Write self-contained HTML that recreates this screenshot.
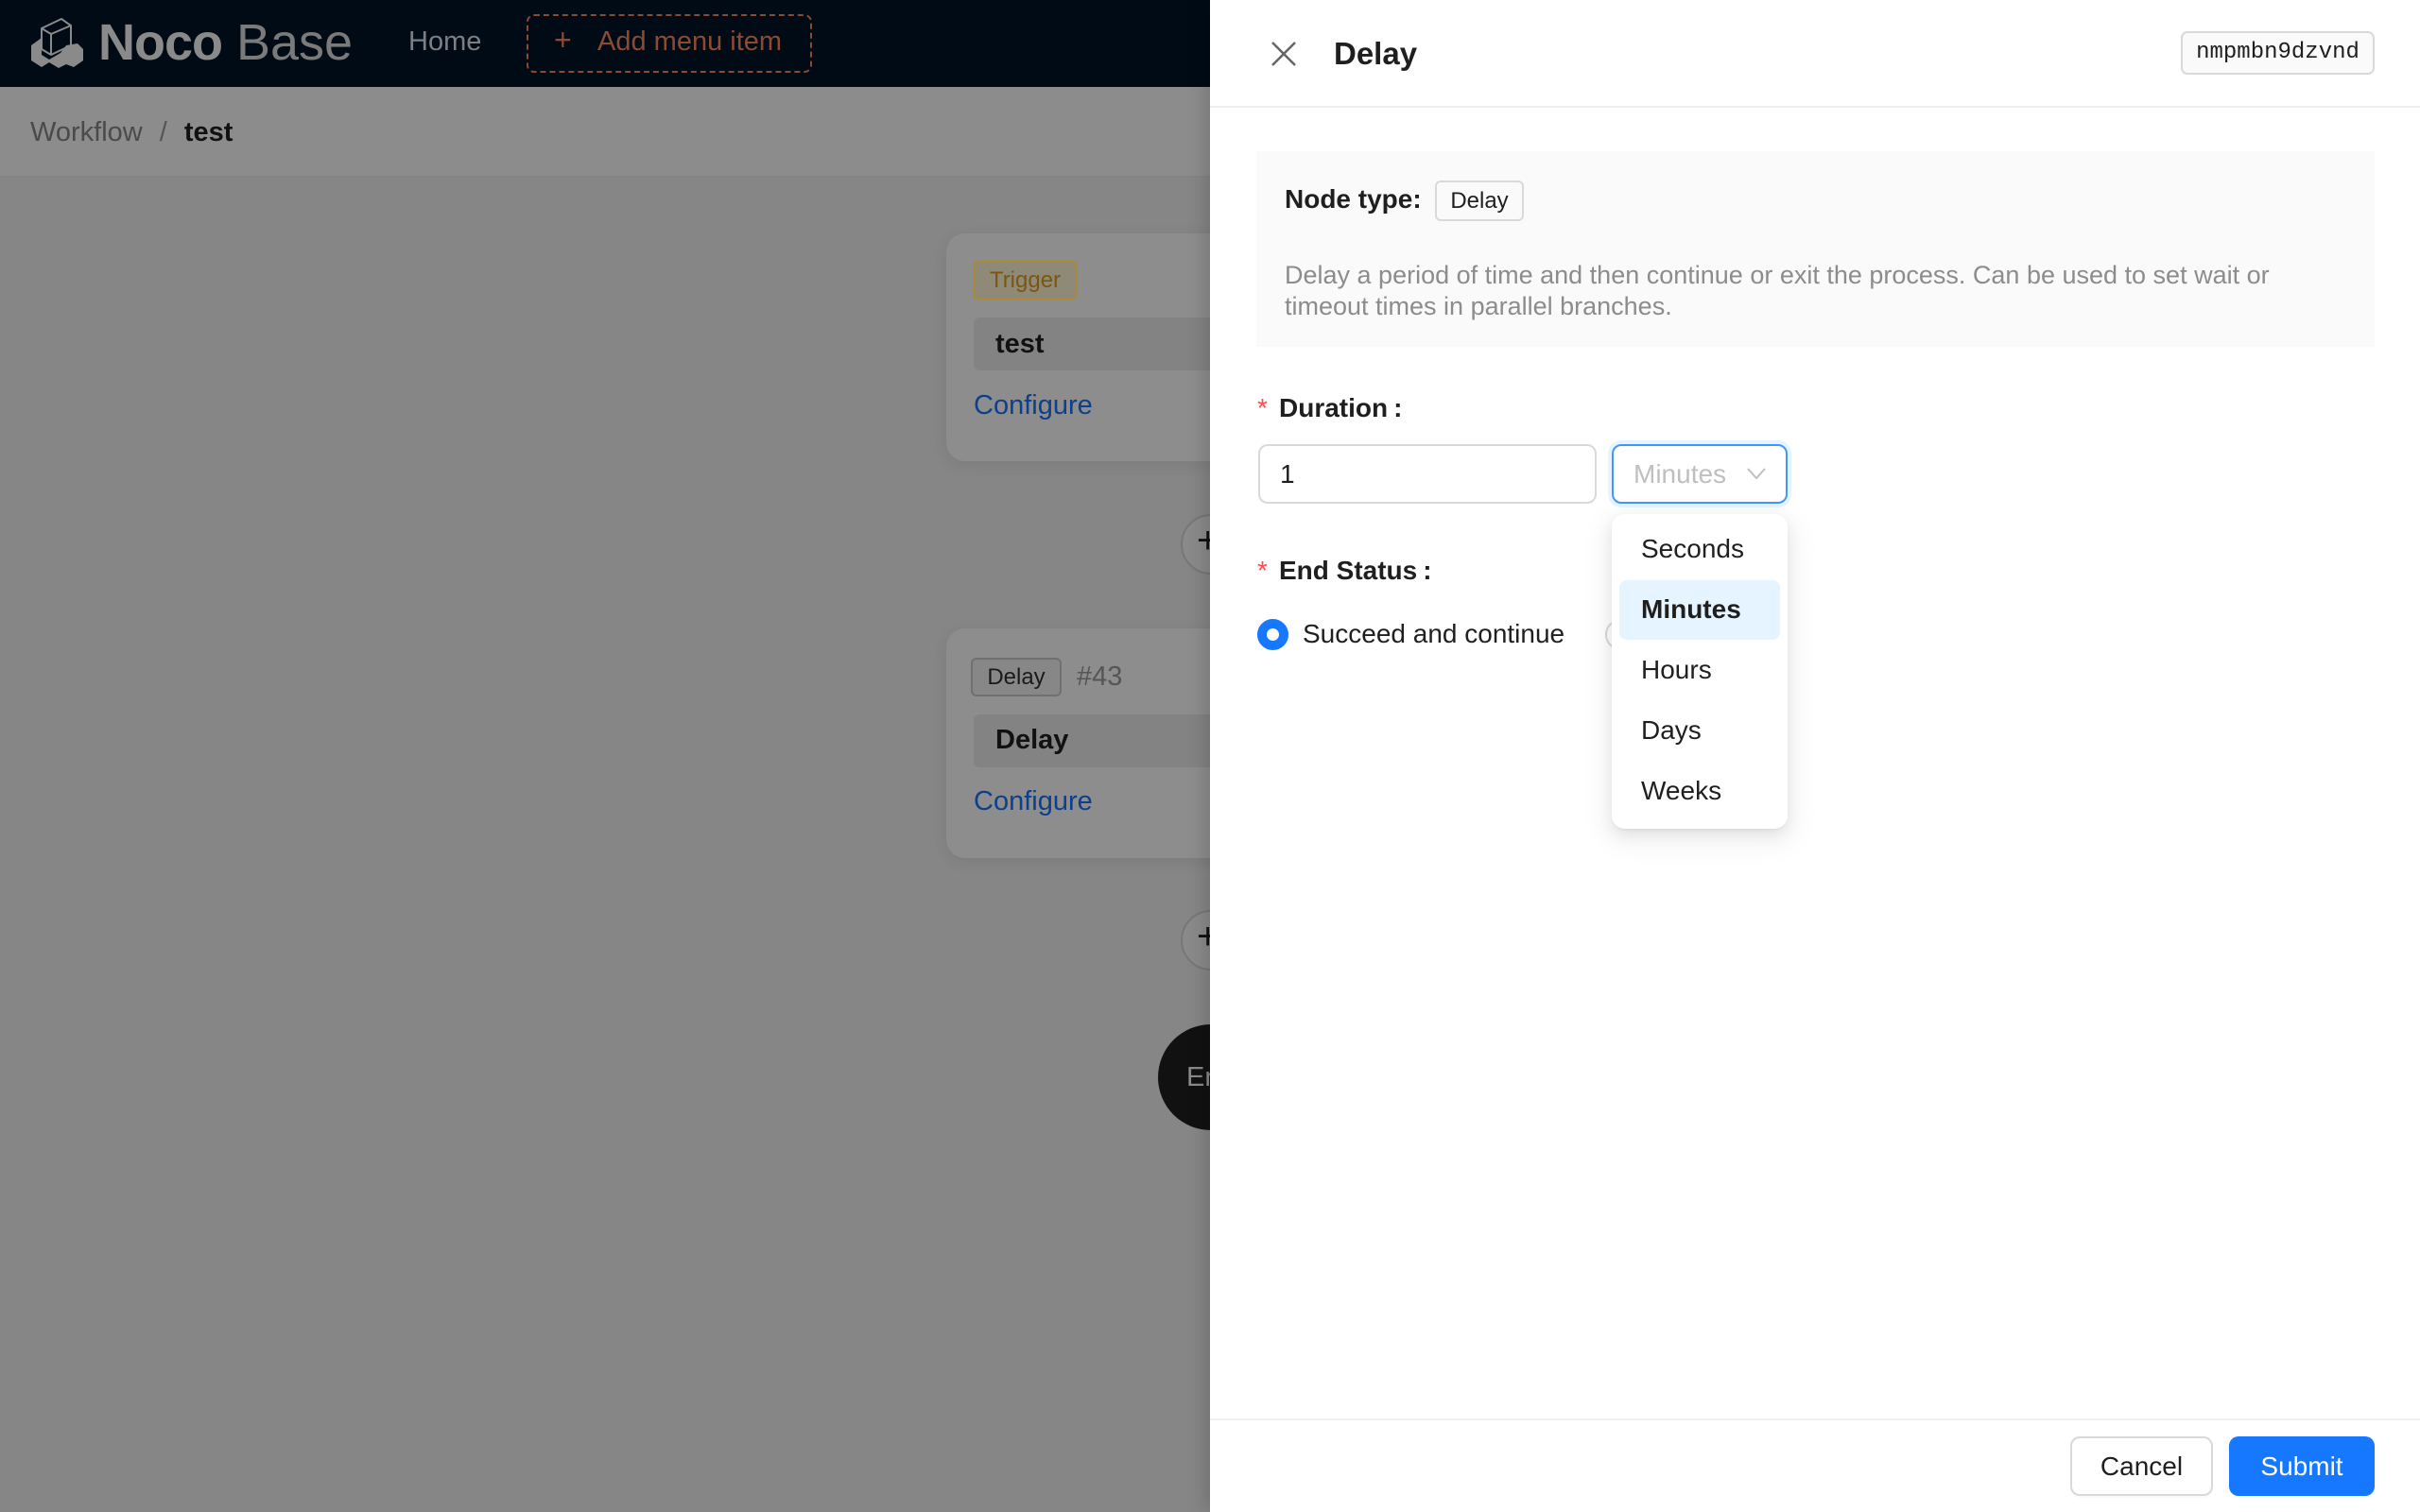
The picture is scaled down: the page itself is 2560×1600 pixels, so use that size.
<!DOCTYPE html>
<html><head><meta charset="utf-8"><style>
*{box-sizing:border-box;margin:0;padding:0}
body{width:2560px;height:1600px;overflow:hidden;position:relative;font-family:"Liberation Sans",sans-serif;background:#868686}
.abs{position:absolute}
#hdr{left:0;top:0;width:1280px;height:92px;background:#000b16}
#bc{left:0;top:92px;width:1280px;height:96px;background:#8c8c8c;border-bottom:2px solid #848484}
.card{background:#8d8d8d;border-radius:20px;box-shadow:0 4px 16px rgba(0,0,0,.08)}
.inner{background:#838383;border-radius:6px}
.tag{border:2px solid #707070;border-radius:6px;font-size:24px;color:#1a1a1a;text-align:center;background:#878787}
.cfg{color:#0d3f8c;font-size:29px}
.plus{width:64px;height:64px;border-radius:50%;border:2px solid #777;background:#8a8a8a}
#drawer{left:1280px;top:0;width:1280px;height:1600px;background:#fff;box-shadow:-6px 0 18px rgba(0,0,0,.15)}
.lbl{font-size:28px;font-weight:bold;color:#1f1f1f}
.req{color:#ff4d4f;font-size:28px}
.item{left:1736px;font-size:28px;color:#1f1f1f}
</style></head><body>
<div id="hdr" class="abs"></div>
<svg class="abs" style="left:30px;top:18px" width="62" height="56" viewBox="0 0 62 56">
<path d="M3 30 L14 22 L14 40 L22 45 L34 38 L40 30 L52 28 L58 34 L58 46 L48 53 L40 50 L32 54 L22 48 L14 53 L3 46 Z" fill="#8a8a8a"/>
<path d="M14 12 L35 2 L45 9 L45 30 L24 40 L14 34 Z" fill="none" stroke="#8a8a8a" stroke-width="2"/>
<path d="M14 12 L24 18 L45 9 M24 18 L24 40" fill="none" stroke="#8a8a8a" stroke-width="2"/>
</svg>
<div class="abs" style="left:104px;top:14px;font-size:54px;font-weight:bold;color:#8a8a8a;letter-spacing:-1px">Noco</div>
<div class="abs" style="left:250px;top:14px;font-size:54px;color:#7a7a7a">Base</div>
<div class="abs" style="left:432px;top:28px;font-size:29px;color:#7c7f84">Home</div>
<div class="abs" style="left:557px;top:15px;width:302px;height:62px;border:2px dashed #8a4a33;border-radius:8px"></div>
<div class="abs" style="left:586px;top:24px;font-size:32px;color:#8a4a33">+</div>
<div class="abs" style="left:632px;top:28px;font-size:29px;color:#8a4a33">Add menu item</div>
<div id="bc" class="abs"></div>
<div class="abs" style="left:32px;top:124px;font-size:29px;color:#4a4a4a">Workflow <span style="margin:0 10px;color:#555">/</span> <b style="color:#111">test</b></div>

<div class="abs card" style="left:1001px;top:247px;width:330px;height:241px"></div>
<div class="abs tag" style="left:1029px;top:276px;width:111px;height:41px;border-color:#a88a3a;background:#8f8a78;color:#7a5610;line-height:37px">Trigger</div>
<div class="abs inner" style="left:1030px;top:336px;width:300px;height:56px"></div>
<div class="abs" style="left:1053px;top:348px;font-size:29px;font-weight:bold;color:#111">test</div>
<div class="abs cfg" style="left:1030px;top:413px">Configure</div>
<div class="abs plus" style="left:1249px;top:544px"></div>
<div class="abs" style="left:1266px;top:550px;font-size:40px;color:#111">+</div>

<div class="abs card" style="left:1001px;top:665px;width:330px;height:243px"></div>
<div class="abs tag" style="left:1027px;top:696px;width:96px;height:41px;line-height:37px">Delay</div>
<div class="abs" style="left:1139px;top:700px;font-size:29px;color:#555">#43</div>
<div class="abs inner" style="left:1030px;top:756px;width:300px;height:56px"></div>
<div class="abs" style="left:1053px;top:767px;font-size:29px;font-weight:bold;color:#111">Delay</div>
<div class="abs cfg" style="left:1030px;top:832px">Configure</div>
<div class="abs plus" style="left:1249px;top:963px"></div>
<div class="abs" style="left:1266px;top:969px;font-size:40px;color:#111">+</div>
<div class="abs" style="left:1225px;top:1084px;width:112px;height:112px;border-radius:50%;background:#111"></div>
<div class="abs" style="left:1255px;top:1124px;font-size:29px;color:#8a8a8a">End</div>

<div id="drawer" class="abs"></div>
<svg class="abs" style="left:1344px;top:43px" width="28" height="28" viewBox="0 0 28 28"><path d="M2 2L26 26M26 2L2 26" stroke="#666" stroke-width="2.6"/></svg>
<div class="abs" style="left:1411px;top:38px;font-size:33px;font-weight:bold;color:#1f1f1f">Delay</div>
<div class="abs" style="left:2307px;top:33px;width:205px;height:46px;border:2px solid #d9d9d9;border-radius:7px;background:#fafafa;font-family:'Liberation Mono',monospace;font-size:24px;line-height:42px;text-align:center;color:#1f1f1f">nmpmbn9dzvnd</div>
<div class="abs" style="left:1280px;top:112px;width:1280px;height:2px;background:#f0f0f0"></div>

<div class="abs" style="left:1329px;top:160px;width:1183px;height:207px;background:#fafafa"></div>
<div class="abs" style="left:1359px;top:195px;font-size:28px;font-weight:bold;color:#1f1f1f">Node type:</div>
<div class="abs" style="left:1518px;top:191px;width:94px;height:43px;border:2px solid #d9d9d9;border-radius:6px;background:#fafafa;font-size:24px;line-height:39px;text-align:center;color:#1f1f1f">Delay</div>
<div class="abs" style="left:1359px;top:275px;width:1120px;font-size:27px;line-height:33px;color:#8c8c8c">Delay a period of time and then continue or exit the process. Can be used to set wait or timeout times in parallel branches.</div>

<div class="abs req" style="left:1330px;top:416px">*</div>
<div class="abs lbl" style="left:1353px;top:416px">Duration<span style="margin-left:6px">:</span></div>
<div class="abs" style="left:1331px;top:470px;width:358px;height:63px;border:2px solid #d9d9d9;border-radius:10px"></div>
<div class="abs" style="left:1354px;top:486px;font-size:28px;color:#1f1f1f">1</div>
<div class="abs" style="left:1705px;top:470px;width:186px;height:63px;border:2px solid #4096ff;border-radius:10px;box-shadow:0 0 0 4px rgba(5,145,255,.1)"></div>
<div class="abs" style="left:1728px;top:486px;font-size:28px;color:#bfbfbf">Minutes</div>
<svg class="abs" style="left:1848px;top:494px" width="20" height="14" viewBox="0 0 20 14"><path d="M1 2L10 12L19 2" fill="none" stroke="#bfbfbf" stroke-width="2"/></svg>

<div class="abs req" style="left:1330px;top:588px">*</div>
<div class="abs lbl" style="left:1353px;top:588px">End Status<span style="margin-left:6px">:</span></div>
<div class="abs" style="left:1330px;top:655px;width:33px;height:33px;border-radius:50%;border:10px solid #1677ff;background:#fff"></div>
<div class="abs" style="left:1378px;top:655px;font-size:28px;color:#1f1f1f">Succeed and continue</div>
<div class="abs" style="left:1698px;top:655px;width:33px;height:33px;border-radius:50%;border:2px solid #d9d9d9"></div>
<div class="abs" style="left:1878px;top:655px;font-size:28px;color:#1f1f1f">t</div>

<div class="abs" style="left:1705px;top:544px;width:186px;height:333px;background:#fff;border-radius:14px;box-shadow:0 6px 16px rgba(0,0,0,.08),0 3px 6px -4px rgba(0,0,0,.12),0 9px 28px 8px rgba(0,0,0,.05)"></div>
<div class="abs" style="left:1713px;top:614px;width:170px;height:63px;background:#e6f4ff;border-radius:8px"></div>
<div class="abs item" style="top:565px">Seconds</div>
<div class="abs item" style="top:629px;font-weight:bold">Minutes</div>
<div class="abs item" style="top:693px">Hours</div>
<div class="abs item" style="top:757px">Days</div>
<div class="abs item" style="top:821px">Weeks</div>

<div class="abs" style="left:1280px;top:1501px;width:1280px;height:2px;background:#f0f0f0"></div>
<div class="abs" style="left:2190px;top:1520px;width:151px;height:63px;border:2px solid #d9d9d9;border-radius:10px;font-size:28px;line-height:59px;text-align:center;color:#1f1f1f;box-shadow:0 2px 0 rgba(0,0,0,.02)">Cancel</div>
<div class="abs" style="left:2358px;top:1520px;width:154px;height:63px;background:#1677ff;border-radius:10px;font-size:28px;line-height:63px;text-align:center;color:#fff">Submit</div>
</body></html>
